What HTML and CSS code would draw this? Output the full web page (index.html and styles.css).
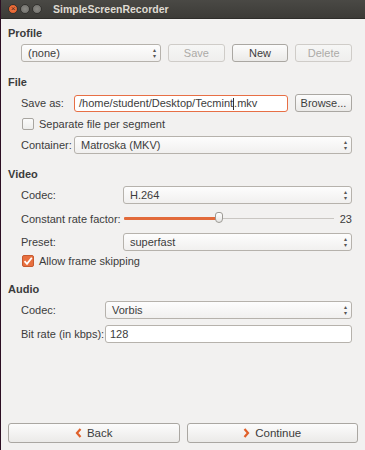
FILE: index.html
```html
<!DOCTYPE html>
<html>
<head>
    <link rel="stylesheet" href="styles.css">
</head>
<body>
  <div class="window">
    <div class="titlebar">
      <div class="wm-buttons">
        <span class="wm close">&#215;</span>
        <span class="wm min"></span>
        <span class="wm max"></span>
      </div>
      <span class="title">SimpleScreenRecorder</span>
    </div>

    <div class="content">
      <h2>Profile</h2>
      <div class="profile-row">
        <div class="combo profile-combo">(none)<span class="arrows">&#9652;<br>&#9662;</span></div>
        <button class="btn" disabled>Save</button>
        <button class="btn">New</button>
        <button class="btn" disabled>Delete</button>
      </div>

      <h2>File</h2>
      <div class="grid file-grid">
        <label>Save as:</label>
        <div class="saveas">
          <div class="textbox focused">/home/student/Desktop/Tecmint<span class="caret"></span>.mkv</div>
          <button class="btn browse">Browse...</button>
        </div>
        <div class="check-row span2">
          <span class="checkbox"></span>
          <span>Separate file per segment</span>
        </div>
        <label>Container:</label>
        <div class="combo">Matroska (MKV)<span class="arrows">&#9652;<br>&#9662;</span></div>
      </div>

      <h2>Video</h2>
      <div class="grid video-grid">
        <label>Codec:</label>
        <div class="combo">H.264<span class="arrows">&#9652;<br>&#9662;</span></div>
        <label>Constant rate factor:</label>
        <div class="slider-row">
          <div class="slider">
            <div class="fill" style="width: 45%"></div>
            <div class="handle" style="left: 45%"></div>
          </div>
          <span class="value">23</span>
        </div>
        <label>Preset:</label>
        <div class="combo">superfast<span class="arrows">&#9652;<br>&#9662;</span></div>
        <div class="check-row span2 tight">
          <span class="checkbox checked">
            <svg width="10" height="10" viewBox="0 0 10 10"><path d="M1.5 5.2 L4 7.8 L8.8 1.8" fill="none" stroke="#fff" stroke-width="1.8"/></svg>
          </span>
          <span>Allow frame skipping</span>
        </div>
      </div>

      <h2>Audio</h2>
      <div class="grid audio-grid">
        <label>Codec:</label>
        <div class="combo">Vorbis<span class="arrows">&#9652;<br>&#9662;</span></div>
        <label>Bit rate (in kbps):</label>
        <div class="textbox">128</div>
      </div>

      <div class="nav">
        <button class="btn navbtn">
          <svg width="7" height="10" viewBox="0 0 7 10"><path d="M5.5 1 L2 5 L5.5 9" fill="none" stroke="#e0602a" stroke-width="2.2"/></svg>
          Back
        </button>
        <button class="btn navbtn">
          <svg width="7" height="10" viewBox="0 0 7 10"><path d="M1.5 1 L5 5 L1.5 9" fill="none" stroke="#e0602a" stroke-width="2.2"/></svg>
          Continue
        </button>
      </div>
    </div>
  </div>
</body>
</html>
```

FILE: styles.css
```css
body {
  margin: 0;
  background: #2c0f23;
  font-family: "Liberation Sans", "DejaVu Sans", sans-serif;
  font-size: 11px;
  color: #3c3c3c;
}

.window {
  margin-left: 1px;
  height: 450px;
  display: flex;
  flex-direction: column;
  background: #f2f1f0;
}

.titlebar {
  height: 19px;
  flex-shrink: 0;
  display: flex;
  align-items: center;
  background: linear-gradient(#4a4945, #3c3b37);
  border-bottom: 1px solid #2e2d2a;
  box-sizing: border-box;
}

.wm-buttons {
  display: flex;
  gap: 2px;
  padding-left: 7px;
  padding-right: 11px;
}

.wm {
  width: 8px;
  height: 8px;
  border-radius: 50%;
  background: radial-gradient(#8a8984, #6e6d69);
  border: 1px solid #33322f;
  font-size: 8px;
  line-height: 8px;
  text-align: center;
  color: #4a2214;
}

.wm.close {
  background: radial-gradient(#f37b4b, #df5a24);
}

.title {
  color: #dfdbd2;
  font-weight: bold;
  font-size: 10.5px;
}

.content {
  flex: 1;
  display: flex;
  flex-direction: column;
  padding: 0 13px 7px 7px;
}

h2 {
  font-size: 11px;
  font-weight: bold;
  margin: 0;
  line-height: 14px;
  color: #3c3c3c;
}

h2:first-child {
  margin-top: 7px;
}

.profile-row {
  display: flex;
  gap: 7px;
  margin: 4px 0 13px 13px;
  height: 18px;
}

.profile-row .btn {
  width: 57px;
}

.profile-combo {
  width: 140px;
  flex-shrink: 0;
}

.grid {
  display: grid;
  column-gap: 0;
  row-gap: 6px;
  align-items: center;
  margin: 5px 0 13px 13px;
}

.file-grid {
  grid-template-columns: 53px 1fr;
}

.video-grid {
  grid-template-columns: 102px 1fr;
  margin-bottom: 15px;
}

.audio-grid {
  grid-template-columns: 84px 1fr;
}

.span2 {
  grid-column: 1 / 3;
}

label {
  white-space: nowrap;
}

.combo, .textbox {
  height: 18px;
  box-sizing: border-box;
  border: 1px solid #b6b2ac;
  border-radius: 3px;
  padding: 0 6px;
  line-height: 16px;
  white-space: nowrap;
  position: relative;
}

.combo {
  background: linear-gradient(#fdfdfd, #f1f0ef);
}

.textbox {
  background: #fff;
  padding: 0 4px;
}

.textbox.focused {
  border-color: #e76f45;
  flex: 1;
  height: 17px;
  line-height: 15px;
}

.caret {
  display: inline-block;
  width: 1px;
  height: 12px;
  background: #333;
  vertical-align: middle;
}

.arrows {
  position: absolute;
  right: 4px;
  top: 2px;
  font-size: 6px;
  line-height: 6px;
  color: #555;
}

.btn {
  height: 18px;
  box-sizing: border-box;
  font-family: inherit;
  font-size: 11px;
  color: #3c3c3c;
  border: 1px solid #aaa7a2;
  border-radius: 3px;
  background: linear-gradient(#fcfcfc, #ebeae8);
  padding: 0 4px;
}

.btn:disabled {
  color: #acaaa7;
  border-color: #cfccc8;
  background: linear-gradient(#f6f6f5, #efeeed);
}

.saveas {
  display: flex;
  align-items: center;
  gap: 7px;
}

.browse {
  width: 57px;
  flex-shrink: 0;
}

.check-row {
  display: flex;
  align-items: center;
  gap: 5px;
  height: 12px;
  padding-left: 1px;
}

.check-row.tight {
  margin-top: -2px;
}

.checkbox {
  width: 12px;
  height: 12px;
  box-sizing: border-box;
  border: 1px solid #a8a5a0;
  border-radius: 2px;
  background: linear-gradient(#fbfbfb, #ededec);
  display: flex;
  align-items: center;
  justify-content: center;
}

.checkbox.checked {
  background: #e8703f;
  border-color: #c75a30;
}

.slider-row {
  display: flex;
  align-items: center;
  height: 17px;
  padding-left: 1px;
}

.slider {
  flex: 1;
  height: 1px;
  background: #c9c6c2;
  position: relative;
}

.fill {
  position: absolute;
  left: 0;
  top: -1px;
  height: 3px;
  background: #e26a3a;
  border-radius: 1px;
}

.handle {
  position: absolute;
  top: -6px;
  width: 8px;
  height: 11px;
  margin-left: -4px;
  box-sizing: border-box;
  border: 1px solid #9d9a95;
  border-radius: 3px 3px 4px 4px;
  background: linear-gradient(#fff, #e6e5e3);
}

.value {
  width: 18px;
  text-align: right;
}

.nav {
  margin-top: auto;
  display: flex;
  gap: 7px;
  margin-right: -6px;
}

.navbtn {
  flex: 1;
  height: 20px;
  display: flex;
  align-items: center;
  justify-content: center;
  gap: 5px;
  font-size: 11.5px;
}
```
